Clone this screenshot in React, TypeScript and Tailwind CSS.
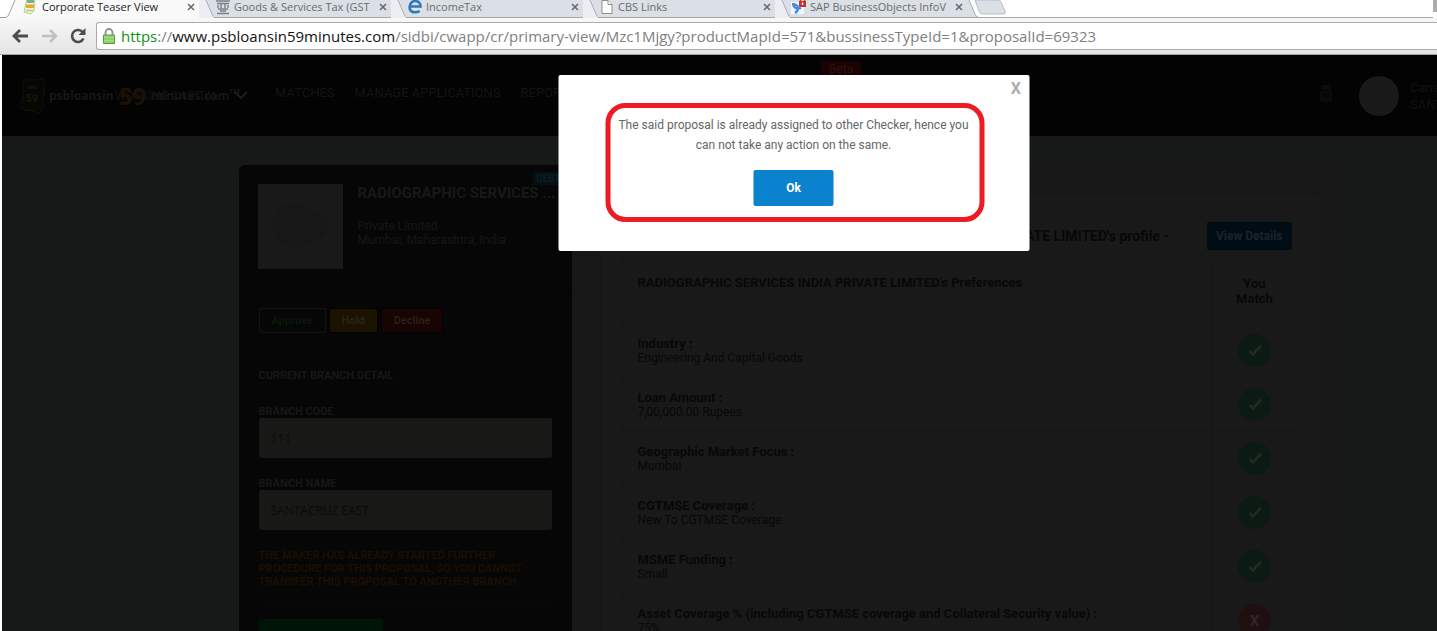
import React from "react";

const CloseX = () => (
  <svg viewBox="0 0 8 8" className="h-2 w-2 shrink-0" stroke="#6a6a6a" strokeWidth="1.6" fill="none">
    <path d="M1 1l6 6M7 1L1 7" />
  </svg>
);

const TeaserIcon = () => (
  <svg viewBox="0 0 14 16" className="h-4 w-4 shrink-0">
    <path d="M4 -2l8 1-1 12-3 3-7-2z" fill="#eef5e4" stroke="#b4cf9a" />
    <path d="M4 0h7v3H4z" fill="#7fae8c" />
    <path d="M3 4.500h8v3.500H3z" fill="#f6a623" />
    <path d="M3 10.500h7" stroke="#b6cf6f" strokeWidth="1.5" />
  </svg>
);

const EmblemIcon = () => (
  <svg viewBox="0 0 16 16" className="h-4 w-4 shrink-0" fill="none" stroke="#7d7f88" strokeWidth="1.4">
    <path d="M1 1h14M2 3.500h12M3 5v3M6 4v4M10 4v4M13 5v3M3 9h10M5 11h6M2 13.500h12" />
  </svg>
);

const EdgeIcon = () => (
  <svg viewBox="0 0 16 16" className="h-4 w-4 shrink-0" fill="none" stroke="#2f78b7" strokeWidth="2.6">
    <path d="M3 6.500h10.500C13.500 3 11 1 8.300 1 5 1 2.600 3.800 2.600 7.200c0 3.400 2.400 5.100 5.600 5.100 1.900 0 3.300-.5 4.500-1.300" />
  </svg>
);

const PageIcon = () => (
  <svg viewBox="0 0 12 16" className="h-4 w-4 shrink-0" fill="#fff" stroke="#8d8d8d">
    <path d="M1 .5h6L11 4.500v9H1z" />
    <path d="M7 .5v4h4" />
  </svg>
);

const SapIcon = () => (
  <svg viewBox="0 0 16 16" className="h-4 w-4 shrink-0">
    <path d="M0 2h13v12H0z" fill="#f3f6fb" />
    <path d="M1 4c4 0 6 2 6 4 0 2-1 4-3 5M2 5c2 4 5 4 8 3" fill="none" stroke="#3b86e8" strokeWidth="2.200" />
    <path d="M8 1h7v6H8z" fill="#c8322f" />
    <path d="M9.500 1.500V.5a2 2 0 014 0v1" fill="none" stroke="#c8322f" strokeWidth="1.400" />
    <path d="M10.800 2.500h1.400v2.500h-1.400z" fill="#fff" />
  </svg>
);

const otherTabs = [
  { title: "Goods & Services Tax (GST", icon: <EmblemIcon /> },
  { title: "IncomeTax", icon: <EdgeIcon /> },
  { title: "CBS Links", icon: <PageIcon /> },
  { title: "SAP BusinessObjects InfoV", icon: <SapIcon /> },
];

function TabStrip() {
  return (
    <div className="relative flex h-[18px] shrink-0 overflow-hidden bg-white text-[11px] leading-[14px]">
      <svg viewBox="0 0 16 18" className="h-[18px] w-4 shrink-0">
        <path d="M15 0L9 14q-1 3-3 3.500H16V0z" fill="#f9f9f9" />
        <path d="M0 17.500h6q2-.5 3-3.500L15 0" fill="none" stroke="#a0a0a0" />
      </svg>
      <div className="flex w-[183px] shrink-0 items-start gap-1 bg-[#f9f9f9] pr-1 pl-1.5 text-[#222]">
        <TeaserIcon />
        <span className="min-w-0 grow whitespace-nowrap">Corporate Teaser View</span>
        <button type="button" aria-label="Close tab" className="pt-[3px]"><CloseX /></button>
      </div>
      {otherTabs.map((tab) => (
        <div key={tab.title} className="flex w-48 shrink-0 border-b border-[#a3a7ad] bg-[#dbdfe6] text-[#6c6c6c]">
          <svg viewBox="0 0 16 18" className="h-[18px] w-4 shrink-0">
            <path d="M0 0h7l6 14q1 3 3 4H0z" fill="#eceef1" />
            <path d="M7 0l6 14q1 3 3 4" fill="none" stroke="#a8abb0" />
          </svg>
          <div className="flex min-w-0 grow items-start gap-[3px]">
            {tab.icon}
            <span className="min-w-0 grow overflow-hidden whitespace-nowrap">{tab.title}</span>
            <button type="button" aria-label="Close tab" className="pt-[3px] pr-1"><CloseX /></button>
          </div>
        </div>
      ))}
      <div className="grow border-b border-[#a3a7ad]">
        <svg viewBox="0 0 48 17" className="h-[17px] w-12">
          <path d="M0 0h2l6 14q1 3 3 3H0z" fill="#dbdfe6" />
          <path d="M2 0l6 14q1 3 3 3" fill="none" stroke="#a8abb0" />
          <path d="M8 0h23q2 0 3 2l4 9q1 3-2 3H16q-3 0-4-3z" fill="#dbdfe6" stroke="#b8bbc0" />
        </svg>
      </div>
      <div className="h-3 w-1 bg-[#ababab]" />
    </div>
  );
}

function Toolbar() {
  return (
    <div className="flex h-[37px] shrink-0 items-center border-b border-[#a5a5a5] bg-linear-to-b from-[#f8f8f8] to-[#e4e4e4]">
      <div className="flex w-24 shrink-0 items-center gap-3 pl-3">
        <button type="button" aria-label="Back">
          <svg viewBox="0 0 17 16" className="h-4 w-[17px]" fill="none" stroke="#4d4d4d" strokeWidth="2.800">
            <path d="M16 8H2M8 2L2 8l6 6" />
          </svg>
        </button>
        <button type="button" aria-label="Forward">
          <svg viewBox="0 0 17 16" className="h-4 w-[17px]" fill="none" stroke="#c0c0c0" strokeWidth="2.600">
            <path d="M1 8h14M9 2l6 6-6 6" />
          </svg>
        </button>
        <button type="button" aria-label="Reload">
          <svg viewBox="0 0 16 16" className="h-4 w-4" fill="none" stroke="#4d4d4d" strokeWidth="2.600">
            <path d="M13 4.500A6 6 0 1013.500 10.500" />
            <path d="M15.500 0v7h-7z" fill="#4d4d4d" stroke="none" />
          </svg>
        </button>
      </div>
      <div className="flex h-7 min-w-0 grow items-center gap-1.5 rounded-l-[3px] border border-r-0 border-[#ababab] bg-white pl-1.5">
        <svg viewBox="0 0 12 16" className="h-4 w-3 shrink-0">
          <path d="M2.500 8V4.500a3.500 3.500 0 017 0V8" fill="none" stroke="#8f8f8f" strokeWidth="1.800" />
          <path d="M.5 7h11v8.500H.5z" fill="#8fd06b" stroke="#5b9a3c" />
          <path d="M1 9.500h10M1 12.500h10" stroke="#a9de8b" />
        </svg>
        <div role="textbox" aria-label="Address" className="min-w-0 overflow-hidden text-[15px] leading-6 whitespace-nowrap text-[#808080]">
          <span className="text-[#0b9410]">https</span>://<span className="text-[#111]">www.psbloansin59minutes.com</span>/sidbi/cwapp/cr/primary-view/Mzc1Mjgy?productMapId=571&amp;bussinessTypeId=1&amp;proposalId=69323
        </div>
      </div>
    </div>
  );
}

function SiteHeader() {
  return (
    <header className="relative flex h-[81px] items-center bg-[#030303] font-[Roboto,sans-serif] text-[13px] leading-4 text-[#131313]">
      <div className="relative flex w-[263px] shrink-0 items-center pl-4">
        <svg viewBox="0 0 30 36" className="h-9 w-[30px] shrink-0" fill="none" stroke="#0d0f07">
          <path d="M9 1l19 4-5 30-21-5z" />
          <path d="M5 3l20-2 1 29-20 3z" fill="#050605" />
          <path d="M10 9.500h9" stroke="#03180b" strokeWidth="3" />
          <path d="M2 9l3 2M1 13l4 1M25 16l3 2M25 20l2 3" strokeDasharray="1 1" />
          <text x="8" y="24" fontSize="10" fontWeight="700" fill="#241501" stroke="none">59</text>
        </svg>
        <a href="#home" className="flex items-center pl-px font-['Noto_Sans',sans-serif] text-[12px] font-bold text-[#161616]">
          <span>psbloansin</span>
          <span className="px-[5px] text-[24px] leading-6 text-[#1d1000]">59</span>
          <span>minutes.com</span>
          <sup className="text-[7px]">TM</sup>
        </a>
        <button type="button" className="absolute top-2.5 left-[113px] flex items-center gap-0.5 text-[12px] whitespace-nowrap text-[#131313]">
          WORKING CAPITAL ...
          <svg viewBox="0 0 14 9" className="h-[9px] w-3.5" fill="none" stroke="#1c1c1c" strokeWidth="2">
            <path d="M1 1l6 6 6-6" />
          </svg>
        </button>
      </div>
      <nav className="flex grow gap-5 border-l border-[#060606] pb-1.5 pl-[9px]">
        <a href="#matches">MATCHES</a>
        <a href="#manage">MANAGE APPLICATIONS</a>
        <a href="#reports">REPORTS</a>
      </nav>
      <span className="absolute top-1.5 left-[819px] rounded-[3px] bg-[#1a0202] px-2 text-[12px] leading-4 text-[#2e1111]">Beta</span>
      <div className="flex w-[265px] shrink-0 items-center">
        <svg viewBox="0 0 12 17" className="mb-1 h-[17px] w-3" fill="#0b0b0b">
          <path d="M1 0h10v5H1zM0 6h12v9q0 2-2 2H2q-2 0-2-2z" />
          <path d="M2 9h8M2 12h8M4 8v6M8 8v6" stroke="#060606" />
        </svg>
        <span className="ml-[27px] h-10 w-10 shrink-0 rounded-full bg-[#191919]" />
        <p className="ml-[11px] text-[13px] leading-[17px] whitespace-nowrap text-[#101015]">
          Canara Bank<br />SANTACRUZ EAST
        </p>
      </div>
    </header>
  );
}

const fieldStyle =
  "block h-10 w-full rounded-xs bg-[#181816] px-3 font-['Open_Sans',sans-serif] text-[12px] font-normal text-[#0c0c0c]";

function ApplicantCard() {
  return (
    <aside className="w-[333px] shrink-0 rounded-tl-md bg-[#060606] text-[#171717]">
      <div className="relative flex h-[124px] gap-[15px] border-b border-[#040404] pt-[19px] pl-[19px]">
        <svg viewBox="0 0 85 85" className="h-[85px] w-[85px] shrink-0 bg-[#191919]">
          <ellipse cx="37" cy="42" rx="23" ry="22" fill="#171717" />
          <circle cx="56" cy="42" r="14" fill="#171717" />
        </svg>
        <div className="text-[12px] leading-[14px] whitespace-nowrap text-[#161616]">
          <h1 className="mb-[17px] text-[15px] leading-[18px] font-bold text-[#181818]">RADIOGRAPHIC SERVICES ...</h1>
          <p>Private Limited</p>
          <p>Mumbai, Maharashtra, India</p>
        </div>
        <span className="absolute top-[7px] right-2 bg-[#031015] px-[3px] text-[10px] leading-[13px] font-bold text-[#0f1c22]">DEBT</span>
      </div>
      <div className="px-5 pt-[19px] text-[11px] leading-[13px] font-bold">
        <div className="flex gap-[3px] leading-[23px]">
          <button type="button" className="rounded-xs border border-[#121412] px-3 text-[#0a180a]">Approve</button>
          <button type="button" className="rounded-xs border border-[#020202] bg-[#1b1200] px-3 text-[#2b2311]">Hold</button>
          <button type="button" className="rounded-xs border border-[#020202] bg-[#170403] px-3 text-[#2c1c1c]">Decline</button>
        </div>
        <h2 className="mt-9">CURRENT BRANCH DETAIL</h2>
        <label className="mt-[23px] block">
          BRANCH CODE
          <input readOnly value="111" className={fieldStyle} />
        </label>
        <label className="mt-[19px] block">
          BRANCH NAME
          <input readOnly value="SANTACRUZ EAST" className={fieldStyle} />
        </label>
        <p className="mt-[19px] border-b border-[#080808] pb-[15px] text-[#1c0e01]">
          THE MAKER HAS ALREADY STARTED FURTHER PROCEDURE FOR THIS PROPOSAL, SO YOU CANNOT TRANSFER THIS PROPOSAL TO ANOTHER BRANCH.
        </p>
        <button type="button" aria-label="Transfer" className="mt-[15px] h-9 w-[124px] rounded-xs bg-[#001408]" />
      </div>
    </aside>
  );
}

const rows = [
  { name: "Industry :", value: "Engineering And Capital Goods", match: true },
  { name: "Loan Amount :", value: "7,00,000.00 Rupees", match: true },
  { name: "Geographic Market Focus :", value: "Mumbai", match: true },
  { name: "CGTMSE Coverage :", value: "New To CGTMSE Coverage", match: true },
  { name: "MSME Funding :", value: "Small", match: true },
  { name: "Asset Coverage % (including CGTMSE coverage and Collateral Security value) :", value: "75%", match: false },
];

function MatchMark({ match }: { match: boolean }) {
  return match ? (
    <svg viewBox="0 0 33 33" className="mx-auto h-[33px] w-[33px]">
      <circle cx="16.500" cy="16.500" r="16.500" fill="#0b1a12" />
      <path d="M11.500 17l3.500 3.500 8-9" fill="none" stroke="#222824" strokeWidth="2.800" />
    </svg>
  ) : (
    <span className="mx-auto flex h-[33px] w-[33px] items-center justify-center rounded-full bg-[#200f10] text-[15px] font-bold text-[#332426]">X</span>
  );
}

function Preferences() {
  return (
    <section className="grow bg-[#171717] p-[30px]">
      <div className="bg-[#191919] px-5 pt-[19px] pb-10">
        <table className="w-full border-collapse border border-[#161616] text-[13px] leading-[14px] text-[#080808]">
          <thead>
            <tr className="h-[43px] border-b border-[#161616]">
              <td colSpan={2} className="px-1.5">
                <div className="flex items-center justify-end gap-[38px]">
                  <h2 className="text-[14px] font-bold">RADIOGRAPHIC SERVICES INDIA PRIVATE LIMITED's profile -</h2>
                  <button type="button" className="h-7 rounded-xs bg-[#000d15] px-[9px] text-[12px] font-bold text-[#1c2329]">View Details</button>
                </div>
              </td>
            </tr>
            <tr className="h-[66px] border-b border-[#161616]">
              <th className="px-[15px] pt-[18px] text-left align-top font-bold">RADIOGRAPHIC SERVICES INDIA PRIVATE LIMITED's Preferences</th>
              <th className="w-[87px] border-l border-[#161616] px-5 text-center leading-[15px] font-bold">You Match</th>
            </tr>
          </thead>
          <tbody>
            {rows.map((row) => (
              <tr key={row.name} className="h-[54px] border-b border-[#161616]">
                <td className="px-[15px]">
                  <p className="font-bold">{row.name}</p>
                  <p className="text-[12px]">{row.value}</p>
                </td>
                <td className="border-l border-[#161616]"><MatchMark match={row.match} /></td>
              </tr>
            ))}
          </tbody>
        </table>
      </div>
    </section>
  );
}

function AssignedDialog() {
  return (
    <div role="dialog" aria-label="Proposal already assigned" className="absolute top-5 left-1/2 w-[471px] -translate-x-1/2 rounded-xs bg-white pt-7 pr-[45px] pb-[29px] pl-[47px] text-[#666]">
      <button type="button" aria-label="Close" className="absolute top-1 right-2 text-[16px] leading-5 font-bold text-[#adadad]">X</button>
      <div className="flex flex-col items-center gap-[15px] rounded-[20px] border-[5px] border-[#ed1c24] pt-[7px] pr-0.5 pb-[11px]">
        <p className="text-center text-[12px] leading-5">
          The said proposal is already assigned to other Checker, hence you can not take any action on the same.
        </p>
        <button type="button" className="h-9 w-20 rounded-xs bg-[#0a82cd] text-[12px] font-bold text-white">Ok</button>
      </div>
    </div>
  );
}

export default function App() {
  return (
    <div className="flex h-screen flex-col overflow-hidden bg-white font-['Open_Sans',sans-serif]">
      <TabStrip />
      <Toolbar />
      <div className="min-h-0 grow overflow-hidden pl-0.5">
        <div className="relative w-[calc(100%+148px)] bg-[#171918] font-[Roboto,sans-serif]">
          <SiteHeader />
          <main className="mx-auto flex max-w-[1110px] pt-[29px]">
            <ApplicantCard />
            <Preferences />
          </main>
          <AssignedDialog />
        </div>
      </div>
    </div>
  );
}
